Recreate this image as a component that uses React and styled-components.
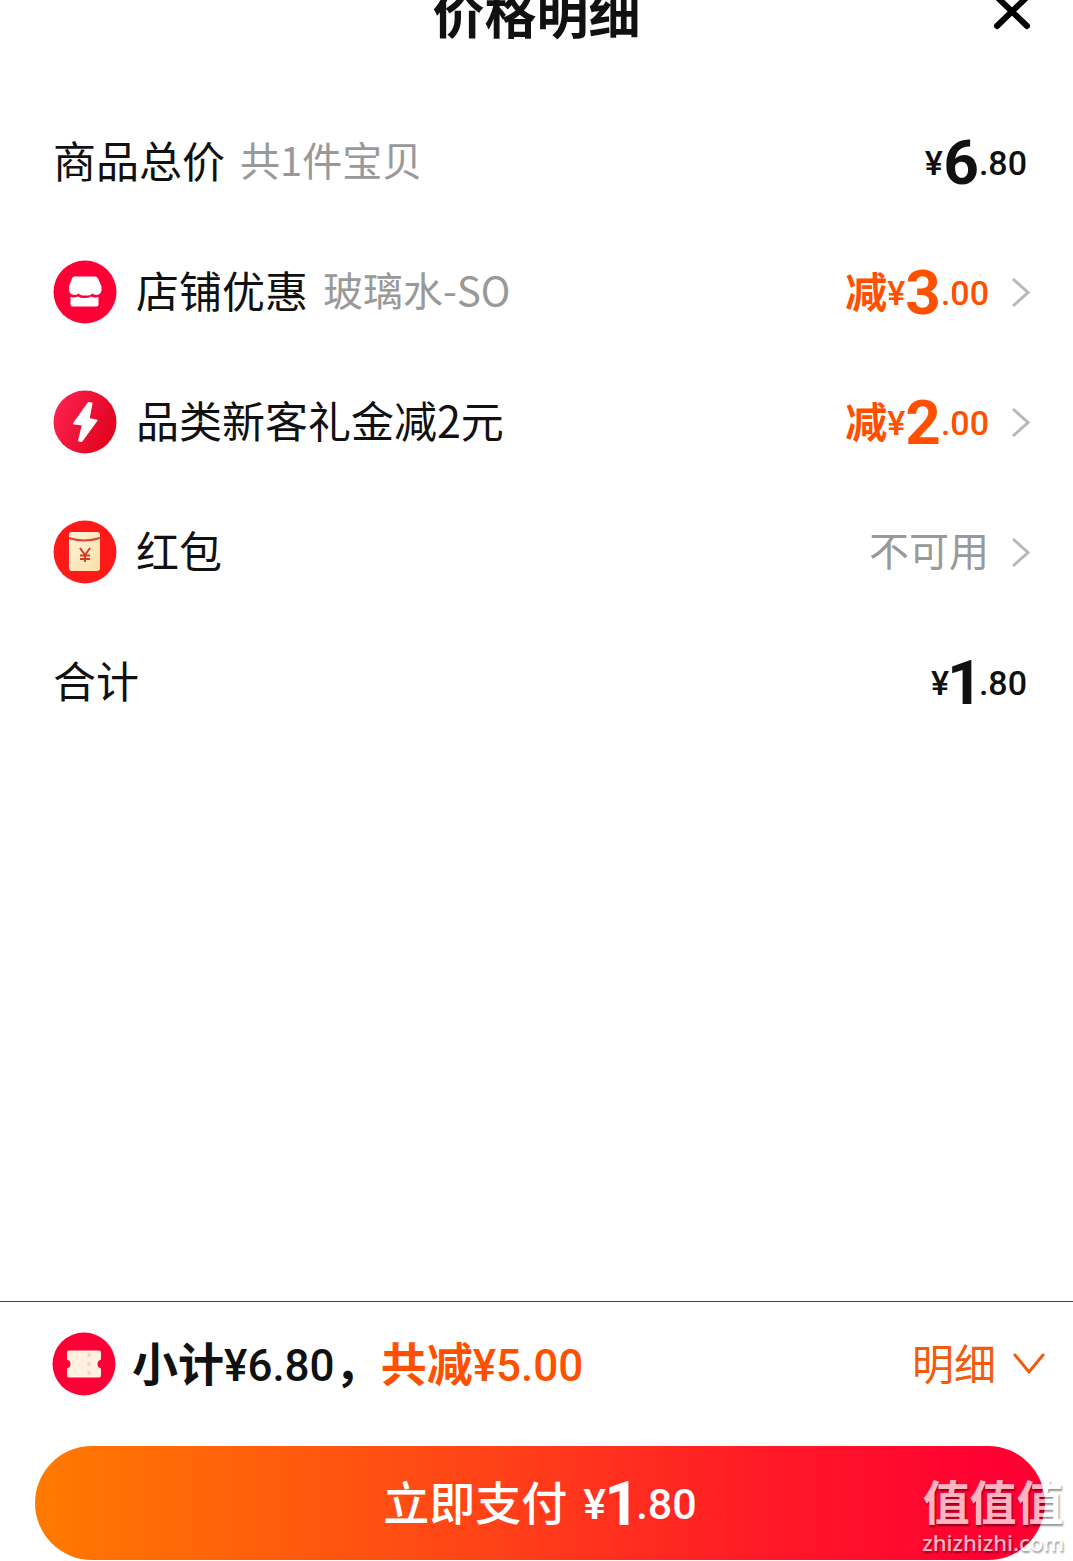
import React from "react";
import styled, { createGlobalStyle, css } from "styled-components";

const GlobalStyle = createGlobalStyle`
  * {
    box-sizing: border-box;
  }

  body {
    margin: 0;
    background-color: #fff;
    color: #111;
    font-family: "Noto Sans CJK SC", sans-serif;
  }

  button {
    border: 0;
    padding: 0;
    background: none;
    color: inherit;
    font-family: inherit;
    cursor: pointer;
  }
`;

const ORANGE = "#ff5000";

const numberText = css`
  font-family: "Roboto", "Noto Sans CJK SC", sans-serif;
`;

// Noto's CJK glyphs sit low in their line box
const liftedText = css`
  padding-bottom: 6px;
`;

const Sheet = styled.main`
  position: relative;
  display: flex;
  flex-direction: column;
  min-height: 100vh;
  overflow: hidden;
`;

const Header = styled.header`
  display: grid;
  grid-template-columns: 1fr auto 1fr;
  align-items: center;
  height: 52px;
  margin-top: -14px;
  padding: 0 42px;
`;

const Title = styled.h1`
  grid-column: 2;
  margin: 0;
  font-size: 52px;
  line-height: 52px;
  font-weight: 700;
`;

const CloseButton = styled.button`
  justify-self: end;
  display: flex;
`;

const List = styled.ul`
  flex: 1;
  margin: 0;
  padding: 59px 42px 0 53px;
  list-style: none;
`;

const Row = styled.li`
  display: flex;
  align-items: center;
  justify-content: space-between;
  height: 130px;
`;

const Label = styled.div`
  display: flex;
  align-items: center;
  font-size: 43px;
  line-height: 64px;
`;

const Name = styled.span`
  ${liftedText}
`;

const IconSlot = styled.span`
  display: flex;
  margin-right: ${(props) => props.$gap || 19}px;
`;

const Note = styled.span`
  ${liftedText}
  margin-left: 15px;
  color: #999;
  font-size: 40px;
`;

const Total = styled.div`
  padding-right: 4px;
`;

const Detail = styled.button`
  display: flex;
  align-items: center;
  gap: 22px;
`;

const Unavailable = styled.span`
  ${liftedText}
  color: #999;
  font-size: 40px;
  line-height: 64px;
`;

const PriceText = styled.span`
  ${numberText}
  display: flex;
  align-items: center;
  padding-top: 2px;
  color: ${(props) => (props.$discount ? ORANGE : "inherit")};
  font-size: 34px;
  font-weight: 500;
  line-height: 64px;
`;

const Minus = styled.span`
  ${liftedText}
  font-family: "Noto Sans CJK SC", sans-serif;
  font-size: 42px;
  font-weight: 700;
`;

const Big = styled.span`
  font-size: 62px;
  font-weight: 700;
  font-variant-numeric: proportional-nums;
`;

const Footer = styled.footer`
  border-top: 1px solid #444;
  padding: 0 28px 1px 35px;
`;

const Subtotal = styled.div`
  display: flex;
  align-items: center;
  height: 124px;
  padding-left: 17px;
  font-size: 46px;
  font-weight: 700;
`;

const Summary = styled.span`
  padding-bottom: 6px;
`;

const Saved = styled.span`
  color: ${ORANGE};
`;

const Amount = styled.span`
  ${numberText}
  font-size: 44px;
  font-weight: 500;
`;

const Toggle = styled.button`
  display: flex;
  align-items: center;
  gap: 17px;
  margin-left: auto;
  color: #f25a0c;
  font-size: 42px;
`;

const PayButton = styled.button`
  display: flex;
  align-items: center;
  justify-content: center;
  gap: 16px;
  width: 100%;
  margin-top: 20px;
  height: 114px;
  border-radius: 57px;
  background: linear-gradient(90deg, #ff7a00 0%, #ff4218 45%, #ff1a26 72%, #ff0033 95%);
  color: #fff;
  font-size: 46px;
  font-weight: 500;

  ${PriceText} {
    font-size: 43px;
  }
`;

const Watermark = styled.div`
  position: absolute;
  right: 9px;
  bottom: 7px;
  color: #fff;
  opacity: 0.7;
  text-align: center;
  text-shadow: 1px 2px 2px rgba(0, 0, 0, 0.6);
  pointer-events: none;
`;

const WatermarkName = styled.div`
  font-size: 47px;
  line-height: 60px;
  font-weight: 700;
`;

const WatermarkSite = styled.div`
  font-family: "Noto Sans", sans-serif;
  font-size: 22px;
  line-height: 24px;
  font-weight: 500;
`;

const ShopIcon = () => (
  <svg width="64" height="64" viewBox="0 0 64 64" aria-hidden="true">
    <circle cx="32" cy="32" r="31.500" fill="#ff0036" />
    <path
      d="M21 16.500h21q2 0 3 2l3.500 8v4q-1 4-4.500 4.500-2.500 0-4.500-1.500-2 2-4.500 2h-5q-2.500 0-4.500-2-2 1.500-4.500 1.500-4-.5-5-4.500v-4l3-8q1-2 2-2z"
      fill="#fff"
    />
    <path
      d="M17.500 37q4 1 7.500-.5 3 2 6.500 1.500 3.500.5 6.500-1.500 3.500 1.500 7.500.5v7.500q0 2-2 2h-24q-2 0-2-2z"
      fill="#fff"
    />
  </svg>
);

const BoltIcon = () => (
  <svg width="64" height="64" viewBox="0 0 64 64" aria-hidden="true">
    <defs>
      <linearGradient id="bolt" x1="0" y1="0" x2="1" y2="0.4">
        <stop offset="0" stopColor="#ff2455" />
        <stop offset="1" stopColor="#e30520" />
      </linearGradient>
    </defs>
    <circle cx="32" cy="32" r="31.500" fill="url(#bolt)" />
    <path
      d="M35.500 13l3 .5-3 15.500 8 1.500-15 20.500-2.500-.5 4-16-9-1z"
      fill="#fff"
      stroke="#fff"
      strokeWidth="2"
      strokeLinejoin="round"
    />
  </svg>
);

const PacketIcon = () => (
  <svg width="64" height="64" viewBox="0 0 64 64" aria-hidden="true">
    <defs>
      <linearGradient id="packet" x1="0" y1="0" x2="1" y2="1">
        <stop offset="0" stopColor="#fff3da" />
        <stop offset="1" stopColor="#f8dfa5" />
      </linearGradient>
    </defs>
    <circle cx="32" cy="32" r="31.500" fill="#ff1a1a" />
    <rect x="16" y="12" width="31" height="39" rx="3" fill="url(#packet)" />
    <path d="M16 18q15 5 31 0" fill="none" stroke="#e2422c" strokeWidth="2" />
    <path
      d="M27 28l5 7 5-7M32 35v7M27 35.500h10M27 39h10"
      fill="none"
      stroke="#cf3b25"
      strokeWidth="2"
    />
  </svg>
);

const TicketIcon = () => (
  <svg width="64" height="64" viewBox="0 0 64 64" aria-hidden="true">
    <circle cx="32" cy="32" r="31.500" fill="#ff0036" />
    <path
      d="M17 18.500h30q2 0 2 2v7q-3.500 1-3.500 4.500t3.500 4.500v7q0 2-2 2H17q-2 0-2-2v-7q3.500-1 3.500-4.500T15 27.500v-7q0-2 2-2z"
      fill="#fff0e0"
    />
    <path d="M37 21v4M37 30v4M37 39v4" stroke="#f5d5c8" strokeWidth="3" />
  </svg>
);

const ArrowRight = () => (
  <svg width="20" height="32" viewBox="0 0 20 32" fill="none" aria-hidden="true">
    <path d="M2 3l15 13.500L2 30" stroke="#b8b8b8" strokeWidth="3" />
  </svg>
);

const ArrowDown = () => (
  <svg width="32" height="24" viewBox="0 0 32 24" fill="none" aria-hidden="true">
    <path
      d="M2 3l14 17L30 3"
      stroke="currentColor"
      strokeWidth="3"
      strokeLinecap="round"
    />
  </svg>
);

const Price = ({ value, discount }) => {
  const [whole, cents] = value.split(".");

  return (
    <PriceText $discount={discount}>
      {discount && <Minus>减</Minus>}
      <span>¥</span>
      <Big>{whole}</Big>
      <span>.{cents}</span>
    </PriceText>
  );
};

const ROWS = [
  { label: "商品总价", note: "共1件宝贝", total: "6.80" },
  { label: "店铺优惠", note: "玻璃水-SO", icon: ShopIcon, discount: "3.00" },
  { label: "品类新客礼金减2元", icon: BoltIcon, discount: "2.00" },
  { label: "红包", icon: PacketIcon },
  { label: "合计", total: "1.80" },
];

const PriceRow = ({ label, note, icon: Icon, total, discount }) => (
  <Row>
    <Label>
      {Icon && (
        <IconSlot>
          <Icon />
        </IconSlot>
      )}
      <Name>{label}</Name>
      {note && <Note>{note}</Note>}
    </Label>
    {total ? (
      <Total>
        <Price value={total} />
      </Total>
    ) : (
      <Detail type="button">
        {discount ? <Price value={discount} discount /> : <Unavailable>不可用</Unavailable>}
        <ArrowRight />
      </Detail>
    )}
  </Row>
);

const App = () => {
  return (
    <>
      <GlobalStyle />
      <Sheet>
        <Header>
          <Title>价格明细</Title>
          <CloseButton type="button" aria-label="关闭">
            <svg width="38" height="38" viewBox="0 0 38 38" aria-hidden="true">
              <path
                d="M4 4l30 29M34 4L4 33"
                stroke="#000"
                strokeWidth="6"
                strokeLinecap="round"
              />
            </svg>
          </CloseButton>
        </Header>
        <List>
          {ROWS.map((row) => (
            <PriceRow key={row.label} {...row} />
          ))}
        </List>
        <Footer>
          <Subtotal>
            <IconSlot $gap={16}>
              <TicketIcon />
            </IconSlot>
            <Summary>
              小计<Amount>¥6.80</Amount>，
              <Saved>
                共减<Amount>¥5.00</Amount>
              </Saved>
            </Summary>
            <Toggle type="button">
              <Name>明细</Name>
              <ArrowDown />
            </Toggle>
          </Subtotal>
          <PayButton type="button">
            <Name>立即支付</Name>
            <Price value="1.80" />
          </PayButton>
        </Footer>
        <Watermark>
          <WatermarkName>值值值</WatermarkName>
          <WatermarkSite>zhizhizhi.com</WatermarkSite>
        </Watermark>
      </Sheet>
    </>
  );
};

export default App;
